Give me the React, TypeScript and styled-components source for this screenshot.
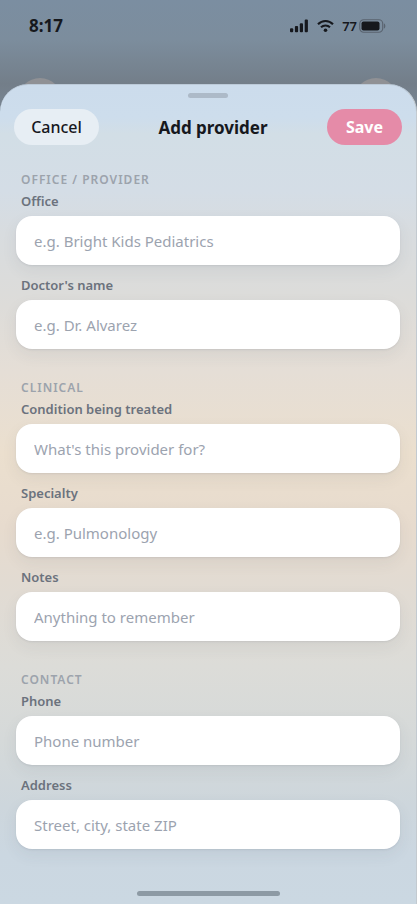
import React from "react";
import styled, { createGlobalStyle } from "styled-components";

const GlobalStyle = createGlobalStyle`
  * { box-sizing: border-box; }
  body { margin: 0; background: #cbd8e2; }
  body, button, input { font-family: "Noto Sans", "Open Sans", sans-serif; }
`;

const Screen = styled.div`
  min-height: 100vh;
  display: flex;
  flex-direction: column;
  background: linear-gradient(#7b8ea1 0px, #7c8d9d 40px, #737e89 84px, #7c8a98 130px);
`;

const StatusBar = styled.header`
  display: flex;
  align-items: center;
  justify-content: space-between;
  height: 52px;
  padding: 0 31px 0 29px;
  color: #16181d;
`;

const Clock = styled.time`
  font-size: 17px;
  font-weight: 700;
  line-height: 24px;
`;

const Indicators = styled.div`
  display: flex;
  align-items: center;
`;

const BatteryLevel = styled.span`
  margin: 0 2px 0 8px;
  font-size: 13px;
  font-weight: 600;
  line-height: 20px;
`;

const WifiSlot = styled.span`
  display: flex;
  margin-left: 9px;
`;

const BehindRow = styled.div`
  display: flex;
  justify-content: space-between;
  height: 32px;
  padding: 26px 19px 0 18px;
  overflow: hidden;
`;

const BehindButton = styled.span`
  width: 44px;
  height: 44px;
  border-radius: 50%;
  background: #909195;
`;

const Sheet = styled.main`
  flex: 1;
  display: flex;
  flex-direction: column;
  align-items: stretch;
  padding: 8px 16px;
  border-top: 1px solid #bccad8;
  border-right: 1px solid #c3cad0;
  border-radius: 28px 28px 0 0;
  background: linear-gradient(
    #ccdcec 0%, #cdddec 4%, #d2dee6 6%, #d4dde6 13%, #d8dcdf 18%, #dddcd9 27%,
    #e5ded6 35%, #ebdfce 45%, #e7dbce 54%, #e1dbd3 62%, #dcdcd8 71%, #d5d9d9 80%,
    #cdd6dc 88%, #cbd7e1 94%, #cbd8e2 100%
  );
`;

const Grabber = styled.span`
  align-self: center;
  width: 40px;
  height: 5px;
  border-radius: 3px;
  background: #adbac8;
`;

const SheetHeader = styled.div`
  display: flex;
  align-items: center;
  justify-content: space-between;
  margin: 11px -2px 25px;
`;

const PillButton = styled.button<{ $primary?: boolean }>`
  min-width: ${(p) => (p.$primary ? "75px" : "85px")};
  height: 36px;
  padding: 0 16px;
  border: 0;
  border-radius: 18px;
  background: ${(p) => (p.$primary ? "#e58ba8" : "#e7eef4")};
  color: ${(p) => (p.$primary ? "#ffffff" : "#16181d")};
  font-size: 16px;
  font-weight: ${(p) => (p.$primary ? 700 : 500)};
  line-height: 24px;
`;

const Title = styled.h1`
  margin: 0;
  padding-top: 1px;
  color: #16181d;
  font-size: 17px;
  font-weight: 700;
  line-height: 24px;
`;

const Form = styled.form`
  display: flex;
  flex-direction: column;
  gap: 29px;
`;

const Section = styled.section`
  display: flex;
  flex-direction: column;
  gap: 1px;
`;

const SectionTitle = styled.h2`
  margin: 0;
  padding-left: 5px;
  color: #9ca3ac;
  font-size: 12px;
  font-weight: 600;
  letter-spacing: 1px;
  line-height: 20px;
  text-transform: uppercase;
`;

const Fields = styled.div`
  display: flex;
  flex-direction: column;
  gap: 10px;
`;

const Field = styled.div`
  display: flex;
  flex-direction: column;
  gap: 5px;
`;

const Label = styled.label`
  padding-left: 5px;
  color: #6b727d;
  font-size: 13px;
  font-weight: 600;
  line-height: 20px;
`;

const TextInput = styled.input`
  width: 100%;
  height: 49px;
  padding: 0 18px;
  border: 0;
  border-radius: 16px;
  background: #ffffff;
  box-shadow: 0 1px 2px rgba(60, 70, 85, 0.1), 0 6px 16px rgba(60, 70, 85, 0.07);
  color: #16181d;
  font-size: 15px;

  &::placeholder {
    color: #9ca3af;
    opacity: 1;
  }
`;

const HomeIndicator = styled.span`
  align-self: center;
  width: 143px;
  height: 5px;
  margin-top: auto;
  border-radius: 3px;
  background: #8d9aa4;
`;

const sections = [
  {
    title: "Office / Provider",
    fields: [
      { id: "office", label: "Office", placeholder: "e.g. Bright Kids Pediatrics" },
      { id: "doctor", label: "Doctor's name", placeholder: "e.g. Dr. Alvarez" },
    ],
  },
  {
    title: "Clinical",
    fields: [
      { id: "condition", label: "Condition being treated", placeholder: "What's this provider for?" },
      { id: "specialty", label: "Specialty", placeholder: "e.g. Pulmonology" },
      { id: "notes", label: "Notes", placeholder: "Anything to remember" },
    ],
  },
  {
    title: "Contact",
    fields: [
      { id: "phone", label: "Phone", placeholder: "Phone number" },
      { id: "address", label: "Address", placeholder: "Street, city, state ZIP" },
    ],
  },
];

const SignalIcon = () => (
  <svg width="18" height="14" viewBox="0 0 18 14" fill="currentColor" aria-hidden="true">
    <rect x="0" y="9.2" width="3.2" height="4" rx="1" />
    <rect x="4.9" y="7" width="3.2" height="6.2" rx="1" />
    <rect x="9.8" y="4.2" width="3.2" height="9" rx="1" />
    <rect x="14.7" y="0.6" width="3.2" height="12.6" rx="1" />
  </svg>
);

const WifiIcon = () => (
  <svg width="17" height="14" viewBox="0 0 17 14" fill="none" stroke="currentColor" strokeWidth="2.1" aria-hidden="true">
    <path d="M1 5.2C5.2 0.9 11.8 0.9 16 5.2" />
    <path d="M4 8.3C6.5 5.9 10.5 5.9 13 8.3" />
    <circle cx="8.5" cy="11.2" r="1.8" fill="currentColor" stroke="none" />
  </svg>
);

const BatteryIcon = () => (
  <svg width="27" height="14" viewBox="0 0 27 14" aria-hidden="true">
    <rect x="0.75" y="0.75" width="23" height="12.5" rx="4" fill="none" stroke="#59636f" strokeWidth="1.2" />
    <rect x="2.5" y="2.5" width="18" height="9" rx="2" fill="#16181d" />
    <path d="M25 4.5c1.8.6 1.8 4.4 0 5z" fill="#59636f" />
  </svg>
);

export default function App() {
  return (
    <>
      <GlobalStyle />
      <Screen>
        <StatusBar>
          <Clock>8:17</Clock>
          <Indicators>
            <SignalIcon />
            <WifiSlot>
              <WifiIcon />
            </WifiSlot>
            <BatteryLevel>77</BatteryLevel>
            <BatteryIcon />
          </Indicators>
        </StatusBar>
        <BehindRow aria-hidden="true">
          <BehindButton />
          <BehindButton />
        </BehindRow>
        <Sheet>
          <Grabber />
          <SheetHeader>
            <PillButton type="button">Cancel</PillButton>
            <Title>Add provider</Title>
            <PillButton type="submit" form="provider-form" $primary>
              Save
            </PillButton>
          </SheetHeader>
          <Form id="provider-form" onSubmit={(e) => e.preventDefault()}>
            {sections.map((section) => (
              <Section key={section.title}>
                <SectionTitle>{section.title}</SectionTitle>
                <Fields>
                  {section.fields.map((field) => (
                    <Field key={field.id}>
                      <Label htmlFor={field.id}>{field.label}</Label>
                      <TextInput
                        id={field.id}
                        name={field.id}
                        type={field.id === "phone" ? "tel" : "text"}
                        placeholder={field.placeholder}
                      />
                    </Field>
                  ))}
                </Fields>
              </Section>
            ))}
          </Form>
          <HomeIndicator />
        </Sheet>
      </Screen>
    </>
  );
}
